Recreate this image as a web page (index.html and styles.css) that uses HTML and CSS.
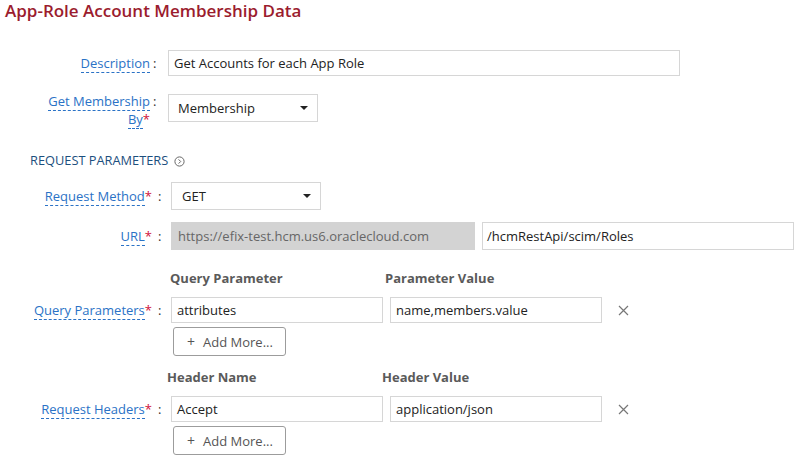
FILE: index.html
```html
<!DOCTYPE html>
<html>
<head>
<meta charset="utf-8">
<link rel="stylesheet" href="styles.css">
</head>
<body>
<h1 class="title">App-Role Account Membership Data</h1>

<div class="sec1">
  <div class="row row-desc">
    <div class="lbl1"><span class="lt">Description</span></div>
    <span class="colon c1">:</span>
    <div class="field w-desc">Get Accounts for each App Role</div>
  </div>
  <div class="row row-member">
    <div class="lbl1 lbl-wrap"><span class="lt">Get Membership</span> <span class="lt">By</span><span class="req">*</span></div>
    <span class="colon c1">:</span>
    <div class="field select sel-member">Membership<span class="caret"></span></div>
  </div>
</div>

<div class="sec-title">REQUEST PARAMETERS
  <svg class="info" width="11" height="11" viewBox="0 0 11 11"><circle cx="5.5" cy="5.5" r="4.6" fill="none" stroke="#666" stroke-width="1"/><path d="M4.6 3.4 L6.7 5.5 L4.6 7.6" fill="none" stroke="#666" stroke-width="1"/></svg>
</div>

<div class="sec2">
  <div class="row row-method">
    <div class="lbl2"><span class="lt">Request Method</span><span class="req">*</span></div>
    <span class="colon c2">:</span>
    <div class="field select sel-method">GET<span class="caret"></span></div>
  </div>
  <div class="row row-url">
    <div class="lbl2"><span class="lt">URL</span><span class="req">*</span></div>
    <span class="colon c2">:</span>
    <div class="field url-base">https://efix-test.hcm.us6.oraclecloud.com</div>
    <div class="field url-path">/hcmRestApi/scim/Roles</div>
  </div>

  <div class="colheads ch-query">
    <div class="ch">Query Parameter</div>
    <div class="ch">Parameter Value</div>
  </div>
  <div class="row row-pair">
    <div class="lbl2"><span class="lt">Query Parameters</span><span class="req">*</span></div>
    <span class="colon c2">:</span>
    <div class="field pair">attributes</div>
    <div class="field pair">name,members.value</div>
    <svg class="close" width="11" height="11" viewBox="0 0 11 11"><path d="M1 1 L10 10 M10 1 L1 10" stroke="#777" stroke-width="1.2"/></svg>
  </div>
  <button class="addmore"><span class="plus">+</span>Add More...</button>

  <div class="colheads ch-header">
    <div class="ch">Header Name</div>
    <div class="ch">Header Value</div>
  </div>
  <div class="row row-pair">
    <div class="lbl2"><span class="lt">Request Headers</span><span class="req">*</span></div>
    <span class="colon c2">:</span>
    <div class="field pair">Accept</div>
    <div class="field pair">application/json</div>
    <svg class="close" width="11" height="11" viewBox="0 0 11 11"><path d="M1 1 L10 10 M10 1 L1 10" stroke="#777" stroke-width="1.2"/></svg>
  </div>
  <button class="addmore"><span class="plus">+</span>Add More...</button>
</div>
</body>
</html>
```

FILE: styles.css
```css
body {
  margin: 0;
  font-family: "Open Sans", "Noto Sans", sans-serif;
  font-size: 13px;
  color: #222;
  background: #fff;
}

.title {
  margin: 0;
  padding: 0 5px;
  font-size: 17px;
  line-height: 22px;
  font-weight: 600;
  color: #9b1c2e;
}

.row {
  display: flex;
  align-items: center;
}

.lt {
  border-bottom: 1px dashed #2a72c6;
}

.req {
  color: #d0103a;
}

.colon {
  color: #333;
  box-sizing: border-box;
  line-height: 18px;
}

.sec1 {
  margin-top: 28px;
}

.lbl1 {
  width: 108px;
  margin-left: 42px;
  text-align: right;
  line-height: 18px;
  color: #2a72c6;
}

.c1 {
  width: 18px;
  padding-left: 3px;
}

.field {
  box-sizing: border-box;
  height: 26px;
  border: 1px solid #d6d6d6;
  padding: 0 5px;
  line-height: 24px;
  color: #222;
  white-space: nowrap;
  overflow: hidden;
}

.w-desc {
  width: 512px;
}

.row-member {
  margin-top: 16px;
  align-items: flex-start;
}

.lbl-wrap {
  width: 106px;
  margin-left: 44px;
}

.select {
  position: relative;
  height: 28px;
  line-height: 26px;
  width: 150px;
}

.sel-member {
  margin-top: 2px;
  padding-left: 9px;
}

.caret {
  position: absolute;
  right: 9px;
  top: 11px;
  width: 0;
  height: 0;
  border-left: 4px solid transparent;
  border-right: 4px solid transparent;
  border-top: 4px solid #222;
}

.sec-title {
  display: flex;
  align-items: center;
  margin: 23px 0 0 30px;
  font-size: 12.8px;
  line-height: 18px;
  color: #1c4f7e;
}

.info {
  margin-left: 6px;
  margin-top: 2px;
}

.sec2 {
  display: flex;
  flex-direction: column;
  align-items: flex-start;
}

.lbl2 {
  width: 152px;
  text-align: right;
  line-height: 18px;
  color: #2a72c6;
}

.c2 {
  width: 19px;
  padding-left: 6px;
}

.row-method {
  margin-top: 13px;
}

.sel-method {
  padding-left: 10px;
}

.row-url {
  margin-top: 12px;
}

.url-base {
  width: 304px;
  height: 28px;
  line-height: 26px;
  background: #d3d3d3;
  border-color: #d3d3d3;
  color: #666;
  padding-left: 6px;
}

.url-path {
  width: 312px;
  height: 28px;
  line-height: 26px;
  margin-left: 7px;
  padding-left: 4px;
}

.colheads {
  display: flex;
  margin-top: 19px;
  font-weight: 700;
  color: #5a5a5a;
  line-height: 18px;
}

.ch {
  width: 215px;
}

.ch-query {
  margin-left: 170px;
}

.ch-header {
  margin-top: 12px;
  margin-left: 167px;
}

.row-pair {
  margin-top: 10px;
}

.pair {
  width: 212px;
}

.pair + .pair {
  margin-left: 7px;
}

.close {
  margin-left: 16px;
}

.addmore {
  margin: 4px 0 0 173px;
  width: 113px;
  height: 29px;
  box-sizing: border-box;
  border: 1px solid #9c9c9c;
  border-radius: 3px;
  background: #fff;
  color: #555;
  font-family: "Open Sans", "Noto Sans", sans-serif;
  font-size: 13px;
  padding: 0 0 0 13px;
  text-align: left;
  line-height: 27px;
}

.plus {
  margin-right: 8px;
  font-size: 14px;
}
```
